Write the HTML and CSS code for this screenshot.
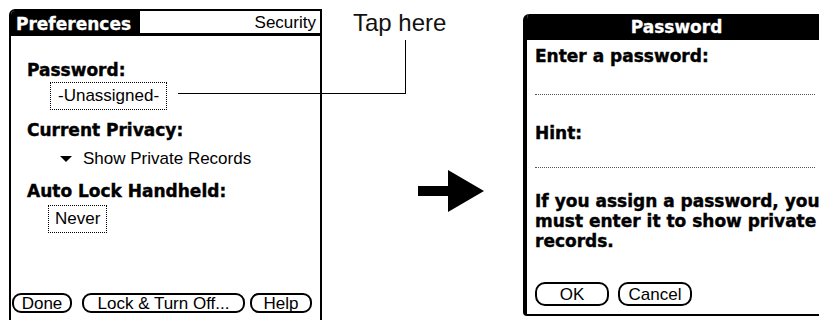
FILE: index.html
```html
<!DOCTYPE html>
<html lang="en">
<head>
  <meta charset="UTF-8">
  <title>Security Preferences</title>
  <link rel="stylesheet" href="styles.css">
</head>
<body>

  <div class="page">

    <section class="screen">
      <div class="screen-header">
        <div class="tab">Preferences</div>
        <div class="screen-name">Security</div>
      </div>

      <div class="screen-body">
        <div class="label">Password:</div>
        <div class="field field-password">-Unassigned-</div>

        <div class="label label-privacy">Current Privacy:</div>
        <div class="picker">
          <svg class="picker-arrow" width="12" height="6" viewBox="0 0 12 6">
            <polygon points="0,0 12,0 6,6" fill="#000"/>
          </svg>
          <span>Show Private Records</span>
        </div>

        <div class="label label-lock">Auto Lock Handheld:</div>
        <div class="field field-never">Never</div>
      </div>

      <div class="buttons">
        <button class="btn btn-done">Done</button>
        <button class="btn btn-lock">Lock &amp; Turn Off...</button>
        <button class="btn btn-help">Help</button>
      </div>
    </section>

    <div class="middle">
      <div class="tap-label">Tap here</div>
      <svg class="arrow" width="66" height="42" viewBox="0 0 66 42">
        <rect x="0" y="16" width="32" height="10" fill="#000"/>
        <polygon points="30,0 66,21 30,42" fill="#000"/>
      </svg>
    </div>

    <section class="dialog">
      <div class="dialog-title">Password</div>
      <div class="dialog-body">
        <div class="label label-enter">Enter a password:</div>
        <div class="entry-line"></div>
        <div class="label label-hint">Hint:</div>
        <div class="entry-line entry-hint"></div>
        <p class="notice">If you assign a password, you<br>must enter it to show private<br>records.</p>
        <div class="dialog-buttons">
          <button class="btn btn-dialog">OK</button>
          <button class="btn btn-dialog">Cancel</button>
        </div>
      </div>
    </section>

    <div class="callout"></div>
  </div>

</body>
</html>
```

FILE: styles.css
```css
* {
  box-sizing: border-box;
}

html,
body {
  margin: 0;
  padding: 0;
  width: 819px;
  height: 320px;
  overflow: hidden;
  background: #ffffff;
  color: #000000;
  font-family: 'Liberation Sans', Arial, sans-serif;
  font-size: 17px;
}

.page {
  position: relative;
  display: flex;
  align-items: flex-start;
  padding-left: 9px;
  height: 320px;
}

/* left: the handheld preferences screen */

.screen {
  display: flex;
  flex-direction: column;
  flex-shrink: 0;
  width: 313px;
  height: 313px;
  margin-top: 9px;
  border: 2px solid #000;
  border-bottom: none;
  border-top-left-radius: 6px;
}

.screen-header {
  display: flex;
  height: 25px;
}

.tab {
  width: 129px;
  padding: 2px 0 0 5px;
  background: #000;
  color: #fff;
  font-family: 'DejaVu Sans', sans-serif;
  font-weight: bold;
  line-height: 23px;
  -webkit-text-stroke: 0.3px #fff;
  border-top-left-radius: 4px;
}

.screen-name {
  flex: 1;
  padding: 1px 4px 0 0;
  text-align: right;
  line-height: 21px;
  border-bottom: 3px solid #000;
}

.screen-body {
  padding: 24px 0 0 16px;
}

.label {
  font-family: 'DejaVu Sans', sans-serif;
  font-weight: bold;
  line-height: 20px;
  -webkit-text-stroke: 0.4px #000;
}

.field {
  display: inline-block;
  height: 28px;
  line-height: 26px;
  border: 1px dotted #000;
}

.field-password {
  margin: 2px 0 0 23px;
  padding: 0 7px;
}

.label-privacy {
  margin-top: 10px;
}

.picker {
  display: flex;
  align-items: flex-start;
  margin: 9px 0 0 33px;
  line-height: 20px;
}

.picker-arrow {
  margin: 7px 11px 0 0;
}

.label-lock {
  margin-top: 12px;
}

.field-never {
  margin: 4px 0 0 21px;
  padding: 0 6px;
}

.buttons {
  display: flex;
  margin-top: auto;
  padding: 0 0 9px 1px;
}

.btn {
  height: 20px;
  padding: 0;
  background: #fff;
  color: #000;
  border: 2px solid #000;
  border-radius: 9px;
  font-family: 'Liberation Sans', Arial, sans-serif;
  font-size: 17px;
  line-height: 15px;
  text-align: center;
}

.btn-done {
  width: 60px;
}

.btn-lock {
  width: 163px;
  margin-left: 10px;
}

.btn-help {
  width: 62px;
  margin-left: 5px;
}

/* middle: annotation and arrow */

.middle {
  display: flex;
  flex-direction: column;
  flex-shrink: 0;
  width: 201px;
}

.tap-label {
  margin: 11px 0 0 31px;
  font-size: 24px;
  line-height: 24px;
  color: #111;
}

.arrow {
  margin: 135px 0 0 96px;
}

.callout {
  position: absolute;
  left: 178px;
  top: 40px;
  width: 228px;
  height: 54px;
  border-right: 1px solid #000;
  border-bottom: 1px solid #000;
}

/* right: password dialog */

.dialog {
  flex-shrink: 0;
  width: 307px;
  margin-top: 14px;
  border-left: 4px solid #000;
  border-bottom: 2px solid #000;
  border-top-left-radius: 6px;
  border-bottom-left-radius: 4px;
  overflow: hidden;
}

.dialog-title {
  height: 26px;
  margin-left: -4px;
  padding-top: 3px;
  background: #000;
  color: #fff;
  font-family: 'DejaVu Sans', sans-serif;
  font-weight: bold;
  line-height: 21px;
  text-align: center;
  -webkit-text-stroke: 0.3px #fff;
}

.dialog-body {
  padding: 0 0 8px 8px;
}

.label-enter {
  margin-top: 6px;
}

.entry-line {
  width: 280px;
  margin-top: 28px;
  border-bottom: 1px dotted #555;
}

.label-hint {
  margin-top: 28px;
}

.entry-hint {
  margin-top: 24px;
}

.notice {
  margin: 23px 0 0;
  font-family: 'DejaVu Sans', sans-serif;
  font-weight: bold;
  line-height: 20px;
  white-space: nowrap;
  -webkit-text-stroke: 0.4px #000;
}

.dialog-buttons {
  display: flex;
  gap: 9px;
  margin-top: 31px;
}

.btn-dialog {
  width: 74px;
  height: 24px;
  border-radius: 10px;
  line-height: 19px;
}
```
